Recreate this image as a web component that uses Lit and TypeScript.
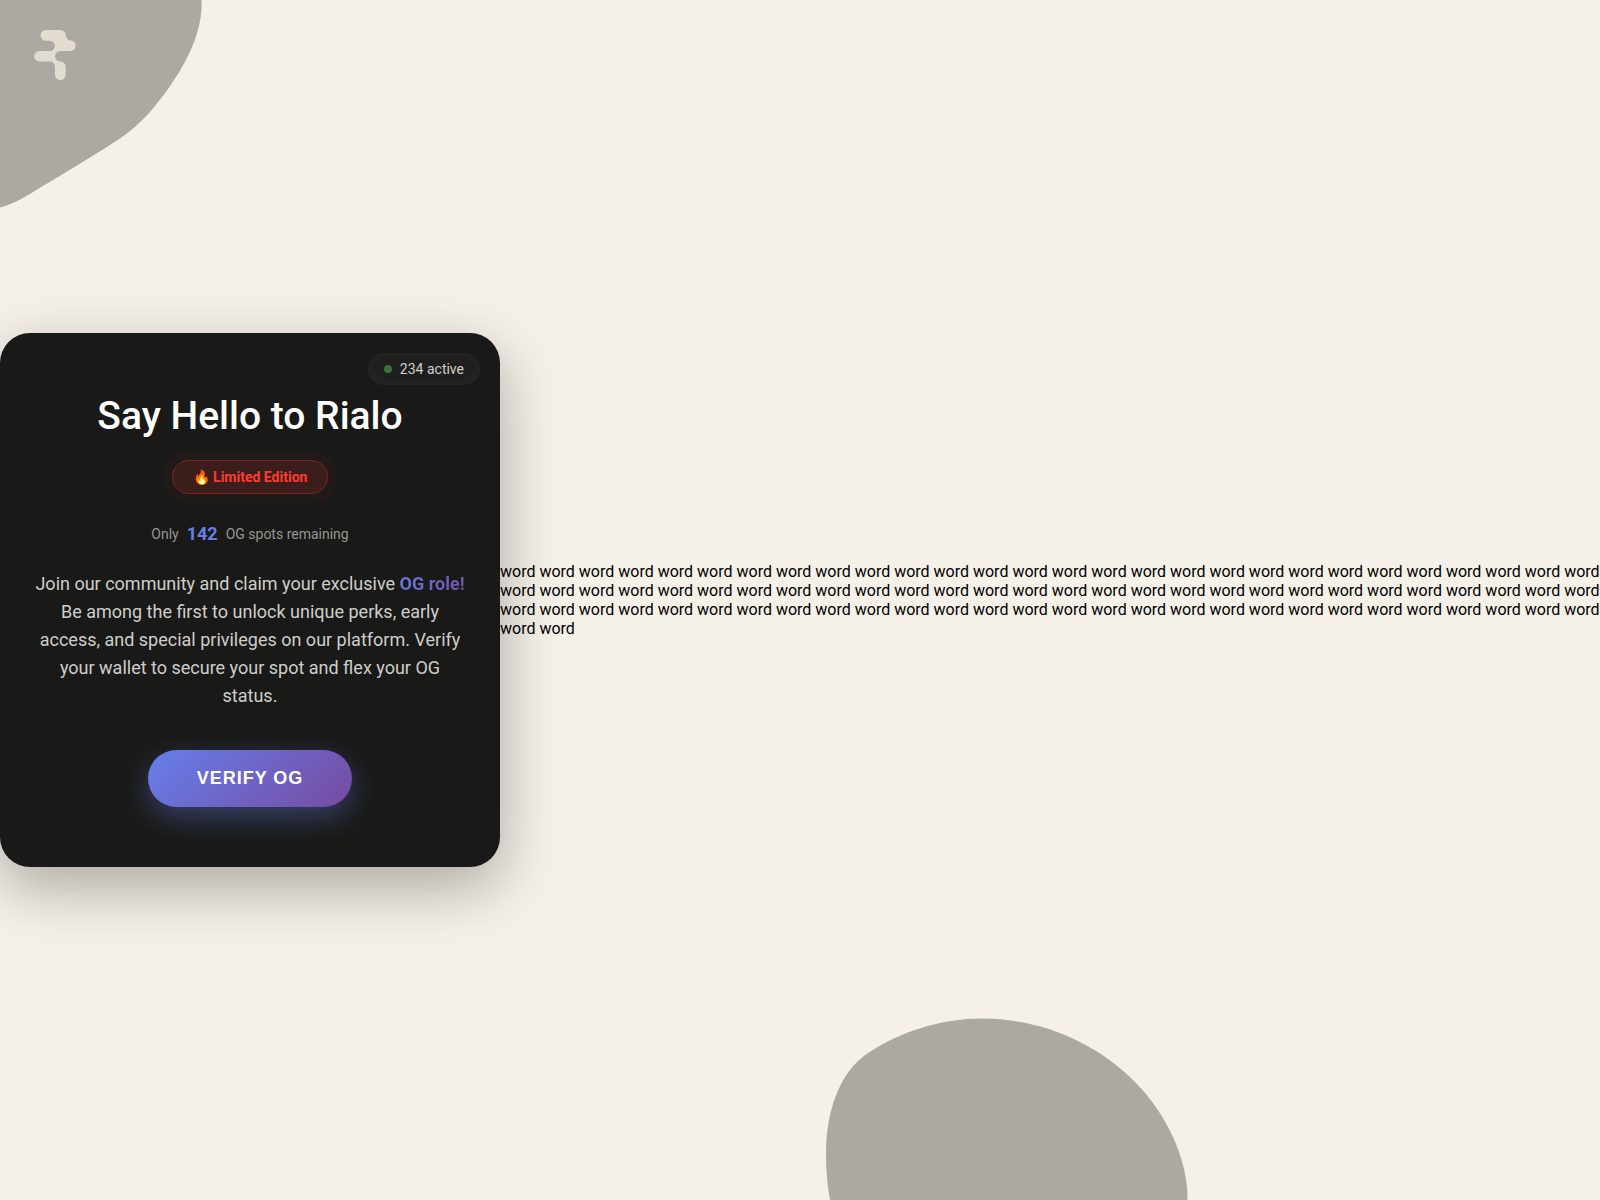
import { LitElement, html, css } from "lit";
import { customElement, property } from "lit/decorators.js";

@customElement("blob-backdrop")
class BlobBackdrop extends LitElement {
  static styles = css`
    :host {
      position: absolute;
      inset: 0;
      overflow: hidden;
      pointer-events: none;
    }
    .blob {
      position: absolute;
      fill: #aca9a3;
    }
    .blob-top {
      top: 0;
      left: 0;
      width: 204px;
      height: 210px;
    }
    .blob-bottom {
      bottom: 0;
      left: 824px;
      width: 366px;
      height: 184px;
    }
  `;

  render() {
    return html`
      <svg class="blob blob-top" viewBox="0 0 204 210" aria-hidden="true">
        <path d="M0 0H201.500C203 30 188 61 168 89C155 107 141 124 122 137C102 151 56 178 34 191.500C22 199 10 205 0 207.500Z" />
      </svg>
      <svg class="blob blob-bottom" viewBox="0 0 366 184" aria-hidden="true">
        <path d="M6 184C3 168 2 153 2 137C2 98 14 57 44 37C76 16 116 2.500 158 2.500C218 2.500 272 27 310 65C344 99 364 145 363.500 184Z" />
      </svg>
    `;
  }
}

@customElement("brand-logo")
class BrandLogo extends LitElement {
  static styles = css`
    :host {
      display: block;
    }
    .mark {
      display: block;
      width: 44px;
      height: 52px;
      fill: #e3dcd0;
    }
  `;

  render() {
    return html`
      <svg class="mark" viewBox="0 0 44 52" role="img" aria-label="Rialo">
        <path
          d="M12 1H26.500A5.300 5.300 0 0 1 31.800 6.300A5.300 5.300 0 0 0 37 11.500A5.300 5.300 0 0 1 37 22H26.300A5.200 5.200 0 0 0 26.300 32.400A5.300 5.300 0 0 1 31.700 37.700V45.700A5.300 5.300 0 0 1 21 45.700V37.800A5.200 5.200 0 0 0 15.800 32.600H5.500A5.300 5.300 0 0 1 5.500 22H15.800A5.100 5.100 0 0 0 15.800 11.700H12A5.300 5.300 0 0 1 12 1Z"
        />
      </svg>
    `;
  }
}

@customElement("og-card")
class OgCard extends LitElement {
  @property({ type: Number }) active = 0;
  @property({ type: Number }) spots = 0;

  static styles = css`
    :host {
      display: block;
    }
    .card {
      position: relative;
      box-sizing: border-box;
      display: flex;
      flex-direction: column;
      align-items: center;
      padding: 60px 32px;
      border-radius: 30px;
      background: #191917;
      box-shadow: 0 20px 60px rgba(0, 0, 0, 0.3);
      text-align: center;
    }
    .activity {
      position: absolute;
      top: 20px;
      right: 20px;
      display: flex;
      align-items: center;
      gap: 8px;
      padding: 8px 16px;
      border-radius: 20px;
      background: #1f1f1e;
      box-shadow: inset 0 0 8px 3px #252523;
      color: #d0cfcb;
      font-size: 14px;
      line-height: 16px;
    }
    .dot {
      width: 8px;
      height: 8px;
      border-radius: 50%;
      background: #37723a;
    }
    .title {
      margin: 0 0 20px;
      color: #ffffff;
      font-size: 39px;
      font-weight: 500;
      line-height: 47px;
    }
    .badge {
      padding: 8px 20px;
      border: 1px solid #7a2722;
      border-radius: 20px;
      background: #3b1e1b;
      box-shadow: 0 0 0 9px #221a18;
      color: #ff3b30;
      font-size: 14px;
      font-weight: 700;
      line-height: 16px;
    }
    .spots {
      display: flex;
      align-items: center;
      gap: 8px;
      margin: 28px 0 24px;
      color: #969592;
      font-size: 14px;
      line-height: 24px;
    }
    .count {
      color: #667eea;
      font-size: 18px;
      font-weight: 700;
    }
    .copy {
      margin: 0 0 40px;
      color: #cfcecb;
      font-size: 18px;
      line-height: 28px;
    }
    .role {
      background: linear-gradient(135deg, #667eea, #764ba2);
      background-clip: text;
      -webkit-background-clip: text;
      color: transparent;
      font-weight: 700;
    }
    .verify {
      padding: 18px 49px;
      border: 0;
      border-radius: 50px;
      background: linear-gradient(135deg, #667eea, #764ba2);
      box-shadow: 0 10px 30px rgba(102, 126, 234, 0.4);
      color: #ffffff;
      font-family: "Liberation Sans", Arial, sans-serif;
      font-size: 18px;
      font-weight: 700;
      letter-spacing: 1px;
      line-height: 21px;
      cursor: pointer;
    }
  `;

  render() {
    return html`
      <section class="card">
        <div class="activity"><span class="dot"></span>${this.active} active</div>
        <h1 class="title">Say Hello to Rialo</h1>
        <div class="badge">🔥 Limited Edition</div>
        <div class="spots">
          <span>Only</span><strong class="count">${this.spots}</strong><span>OG spots remaining</span>
        </div>
        <p class="copy">
          Join our community and claim your exclusive <span class="role">OG role!</span> Be among the
          first to unlock unique perks, early access, and special privileges on our platform. Verify
          your wallet to secure your spot and flex your OG status.
        </p>
        <button class="verify" type="button">VERIFY OG</button>
      </section>
    `;
  }
}

@customElement("app-root")
class AppRoot extends LitElement {
  private filler = Array(86).fill("word").join(" ");

  static styles = css`
    :host {
      position: relative;
      display: block;
      min-height: 100vh;
      background: #f5f0e8;
      color: #000000;
      font-family: Roboto, "Liberation Sans", sans-serif;
      font-size: 16px;
      line-height: 19px;
    }
    .logo {
      position: absolute;
      top: 29px;
      left: 34px;
    }
    .page {
      position: relative;
      display: flex;
      align-items: center;
      min-height: 100vh;
    }
    .panel {
      flex: 0 0 500px;
    }
    .words {
      flex: 1;
      min-width: 0;
      margin: 0;
    }
  `;

  render() {
    return html`
      <blob-backdrop></blob-backdrop>
      <brand-logo class="logo"></brand-logo>
      <main class="page">
        <og-card class="panel" .active=${234} .spots=${142}></og-card>
        <p class="words">${this.filler}</p>
      </main>
    `;
  }
}
